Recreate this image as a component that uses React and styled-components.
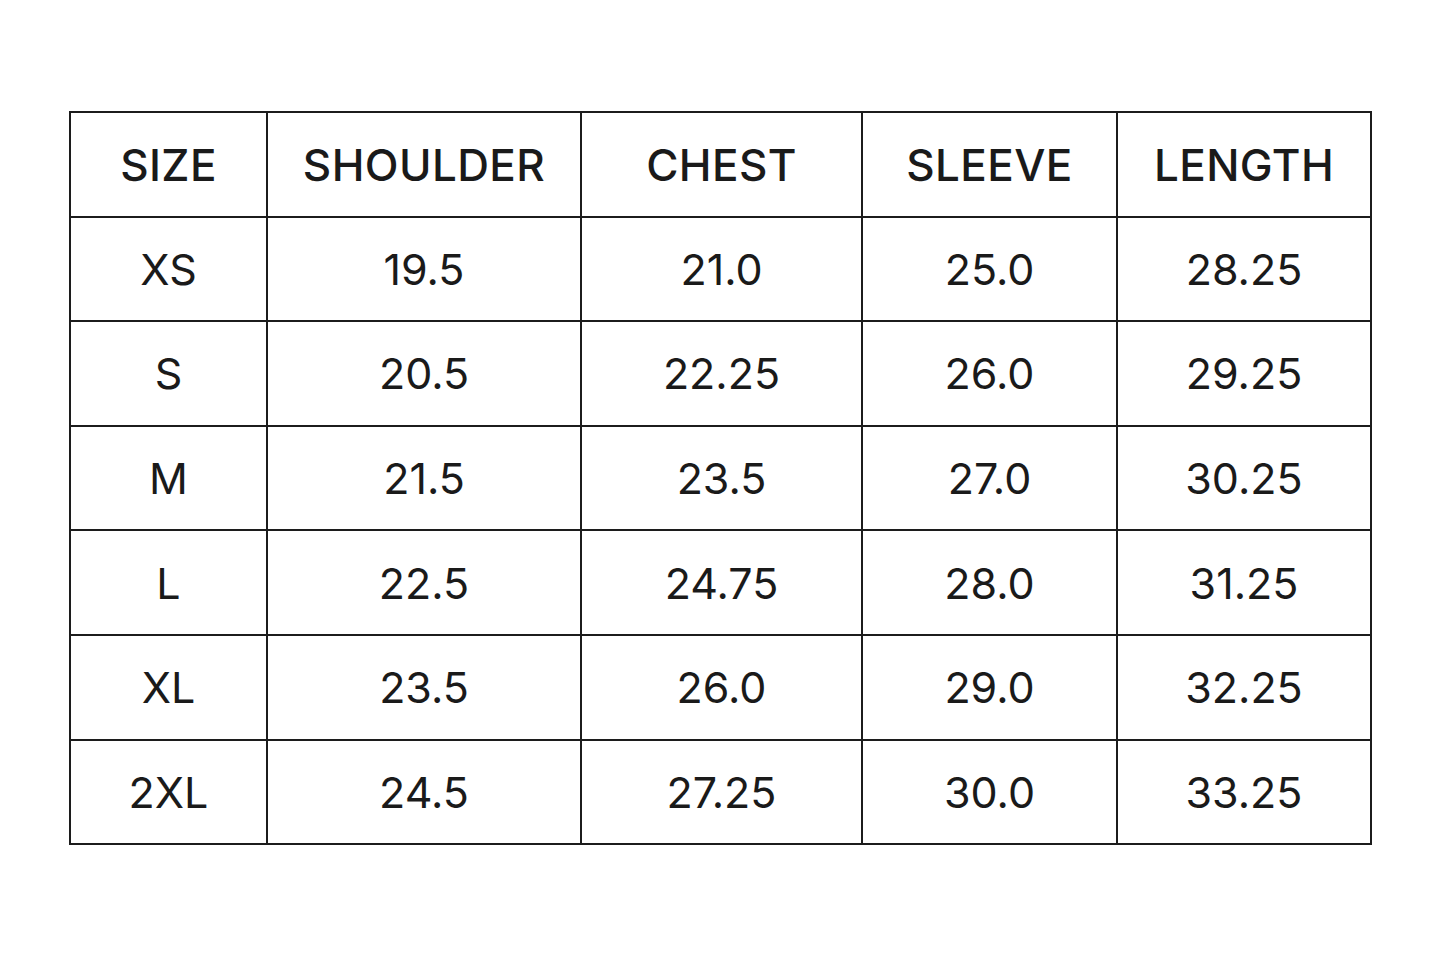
import React from "react";
import styled, { createGlobalStyle } from "styled-components";

const GlobalStyle = createGlobalStyle`
  html, body {
    margin: 0;
    background: #ffffff;
  }
  body {
    font-family: Inter, "Liberation Sans", sans-serif;
    color: #1a1a1a;
  }
`;

const Page = styled.div`
  width: 1445px;
  height: 963px;
  padding: 111px 0 0 69px;
  box-sizing: border-box;
`;

const Table = styled.table`
  border-collapse: collapse;
  table-layout: fixed;
  width: 1301px;
  border: 2px solid #1c1c1c;
`;

const Col = styled.col`
  width: ${(p) => p.$w}px;
`;

const Row = styled.tr`
  height: 104.6px;
`;

const HeadCell = styled.th`
  border: 2px solid #1c1c1c;
  padding: 2px 0 0;
  font-size: 44px;
  font-weight: 500;
  letter-spacing: 0.4px;
  text-align: center;
  vertical-align: middle;
`;

const Cell = styled.td`
  border: 2px solid #1c1c1c;
  padding: 0;
  font-size: 43px;
  font-weight: 400;
  text-align: center;
  vertical-align: middle;
`;

const widths = [197, 314, 281, 255, 254];
const headers = ["SIZE", "SHOULDER", "CHEST", "SLEEVE", "LENGTH"];
const rows = [
  ["XS", "19.5", "21.0", "25.0", "28.25"],
  ["S", "20.5", "22.25", "26.0", "29.25"],
  ["M", "21.5", "23.5", "27.0", "30.25"],
  ["L", "22.5", "24.75", "28.0", "31.25"],
  ["XL", "23.5", "26.0", "29.0", "32.25"],
  ["2XL", "24.5", "27.25", "30.0", "33.25"],
];

const App = () => {
  return (
    <>
      <GlobalStyle />
      <Page>
        <Table>
          <colgroup>
            {widths.map((w, i) => (
              <Col key={i} $w={w} />
            ))}
          </colgroup>
          <thead>
            <Row>
              {headers.map((h) => (
                <HeadCell key={h}>{h}</HeadCell>
              ))}
            </Row>
          </thead>
          <tbody>
            {rows.map((r) => (
              <Row key={r[0]}>
                {r.map((v, i) => (
                  <Cell key={i}>{v}</Cell>
                ))}
              </Row>
            ))}
          </tbody>
        </Table>
      </Page>
    </>
  );
};

export default App;
